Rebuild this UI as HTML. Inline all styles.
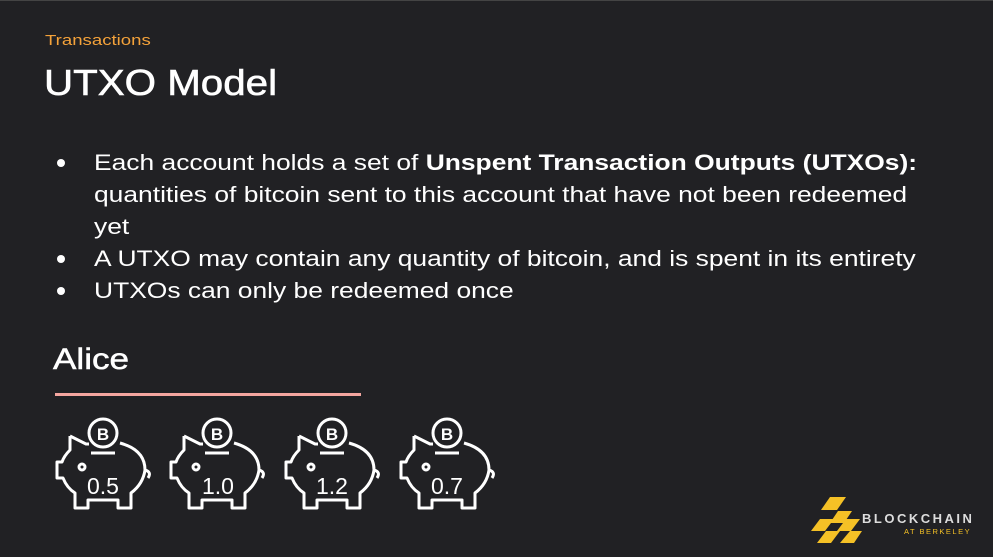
<!DOCTYPE html>
<html><head><meta charset="utf-8"><style>
body{margin:0;width:993px;height:557px;background:#212124;overflow:hidden;font-family:"Liberation Sans",sans-serif;color:#fff;position:relative}
.a{position:absolute;white-space:nowrap;transform-origin:0 0}
.b{font-size:22px;left:94px;transform:scaleX(1.2)}
.d{position:absolute;left:57px;width:8px;height:8px;border-radius:50%;background:#fff}
</style></head><body>
<div style="position:absolute;left:0;top:0;width:993px;height:1px;background:#444"></div>
<div class="a" style="left:45px;top:32px;font-size:15px;color:#f4a23a;transform:scaleX(1.24)">Transactions</div>
<div class="a" style="left:44px;top:62px;font-size:36px;transform:scaleX(1.12);-webkit-text-stroke:0.6px #fff">UTXO Model</div>
<div class="d" style="top:159px"></div>
<div class="a b" style="top:150px">Each account holds a set of <b>Unspent Transaction Outputs (UTXOs):</b></div>
<div class="a b" style="top:182px">quantities of bitcoin sent to this account that have not been redeemed</div>
<div class="a b" style="top:214px">yet</div>
<div class="d" style="top:255px"></div>
<div class="a b" style="top:246px">A UTXO may contain any quantity of bitcoin, and is spent in its entirety</div>
<div class="d" style="top:287px"></div>
<div class="a b" style="top:278px">UTXOs can only be redeemed once</div>
<div class="a" style="left:53px;top:343px;font-size:30px;transform:scaleX(1.17);-webkit-text-stroke:0.5px #fff">Alice</div>
<div style="position:absolute;left:55px;top:393px;width:306px;height:3px;background:#f4a6a0"></div>
<svg width="993" height="557" style="position:absolute;left:0;top:0">
<defs><g id="p" fill="none" stroke="#fff" stroke-width="3" stroke-linejoin="round">
<circle cx="103" cy="433" r="14"/>
<path d="M91,453 H115"/>
<circle cx="82" cy="467" r="3"/>
<path d="M70,436 L70,450 Q64,456 62,462 L57,462 L57,478 L63,478 Q67,488 75,493 L75,508 L88,508 L88,500 L118,500 L118,508 L131,508 L131,493 Q143,484 145,470 Q145,450 120,443 M70,436 L86,444 L89,444 M145,470 Q152,472 148,478"/>
<text x="103" y="440" fill="#fff" stroke="none" font-size="17" font-weight="bold" text-anchor="middle" font-family="Liberation Sans">B</text>
</g></defs>
<use href="#p"/><use href="#p" x="114"/><use href="#p" x="229"/><use href="#p" x="344"/>
<g fill="#fff" font-size="23" text-anchor="middle" font-family="Liberation Sans">
<text x="103" y="494">0.5</text><text x="218" y="494">1.0</text><text x="332" y="494">1.2</text><text x="447" y="494">0.7</text></g>
<g fill="#f5c126">
<path d="M830,497 L846,497 L837,510 L821,510Z"/><path d="M838,511 L852,511 L844,523 L830,523Z"/>
<path d="M820,519 L834,519 L825,531 L811,531Z"/><path d="M826,531 L840,531 L831,543 L817,543Z"/>
<path d="M846,519 L860,519 L851,531 L837,531Z"/><path d="M850,531 L862,531 L854,543 L840,543Z"/>
</g>
<text x="862" y="523" fill="#ddd" font-size="13" font-weight="bold" letter-spacing="2.5" font-family="Liberation Sans">BLOCKCHAIN</text>
<text x="904" y="534" fill="#f5c126" font-size="7.5" letter-spacing="1.5" font-family="Liberation Sans">AT BERKELEY</text>
</svg>
</body></html>
